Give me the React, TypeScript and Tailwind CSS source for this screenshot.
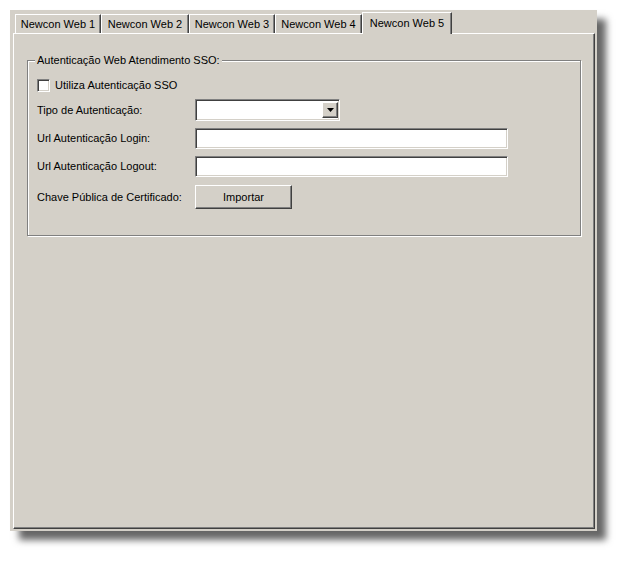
import React from "react";

const tabs = ["Newcon Web 1", "Newcon Web 2", "Newcon Web 3", "Newcon Web 4", "Newcon Web 5"];
const tabWidths = ["w-[86px]", "w-[88px]", "w-[86px]", "w-[87px]"];

const sunken =
  "border border-t-[#808080] border-l-[#808080] border-r-white border-b-white bg-white shadow-[inset_1px_1px_0_#404040,inset_-1px_-1px_0_#d4d0c8]";
const raised =
  "border border-t-white border-l-white border-r-[#404040] border-b-[#404040] bg-[#d4d0c8] shadow-[inset_-1px_-1px_0_#808080]";

const Row = ({ label, children }: { label: string; children: React.ReactNode }) => (
  <div className="flex items-center">
    <span className="w-[158px] shrink-0">{label}</span>
    {children}
  </div>
);

export default function App() {
  return (
    <div className="min-h-screen bg-white p-[10px] font-['Liberation_Sans',Arial,sans-serif] text-[11px] text-black">
      <div className="flex h-[521px] w-[587px] flex-col bg-[#d4d0c8] pb-[2px] pl-[3px] pr-[2px] pt-[2px] shadow-[9px_9px_7px_rgba(0,0,0,0.6)]">
        {/* tab strip */}
        <div className="flex h-[21px] items-end pl-[2px]">
          {tabs.slice(0, 4).map((t, i) => (
            <div
              key={t}
              className={`flex h-[19px] ${tabWidths[i]} items-center justify-center border-l border-t border-r border-l-white border-t-white border-r-[#404040] shadow-[inset_-1px_0_0_#808080]`}
            >
              {t}
            </div>
          ))}
          <div className="relative z-10 -mb-px flex h-[22px] w-[90px] items-start justify-center border-l border-t border-r border-l-white border-t-white border-r-[#404040] bg-[#d4d0c8] pt-[2px] shadow-[inset_-1px_0_0_#808080]">
            {tabs[4]}
          </div>
        </div>

        {/* tab panel */}
        <div className="flex-1 border border-l-white border-t-white border-r-[#404040] border-b-[#404040] px-[13px] pt-[26px] shadow-[inset_-1px_-1px_0_#808080]">
          <div className="border border-[#808080] pb-[26px] pl-[9px] shadow-[inset_1px_1px_0_white,1px_1px_0_white]">
            <div className="-mt-[8px] ml-[-2px] flex h-[14px] w-fit items-center bg-[#d4d0c8] px-[2px]">
              Autenticação Web Atendimento SSO:
            </div>

            <div className="mt-[12px] flex h-[13px] items-center gap-[5px]">
              <div className={`h-[13px] w-[13px] ${sunken}`} />
              <span>Utiliza Autenticação SSO</span>
            </div>

            <div className="mt-[7px] flex flex-col gap-[7px]">
              <Row label="Tipo de Autenticação:">
                <div className={`flex h-[22px] w-[145px] items-center justify-end pr-[1px] ${sunken}`}>
                  <div className={`flex h-[16px] w-[16px] items-center justify-center ${raised}`}>
                    <svg width="7" height="4" viewBox="0 0 7 4">
                      <path d="M0 0h7L3.5 4z" fill="black" />
                    </svg>
                  </div>
                </div>
              </Row>
              <Row label="Url Autenticação Login:">
                <div className={`h-[21px] w-[313px] ${sunken}`} />
              </Row>
              <Row label="Url Autenticação Logout:">
                <div className={`h-[21px] w-[313px] ${sunken}`} />
              </Row>
              <div className="mt-[1px]">
                <Row label="Chave Pública de Certificado:">
                  <button className={`flex h-[24px] w-[97px] items-center justify-center ${raised}`}>
                    Importar
                  </button>
                </Row>
              </div>
            </div>
          </div>
        </div>
      </div>
    </div>
  );
}
